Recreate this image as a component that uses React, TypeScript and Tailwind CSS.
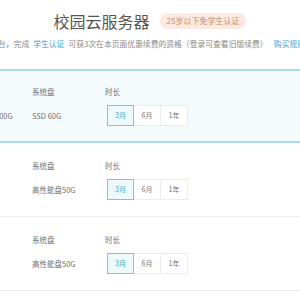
import React from "react";

const font = { fontFamily: '"Noto Sans CJK SC", "Noto Sans", sans-serif' };

const durations = ["3月", "6月", "1年"];

const Durations = () => (
  <div className="flex">
    {durations.map((d, i) => (
      <div
        key={d}
        className={
          i === 0
            ? "w-[27px] h-[21px] flex items-center justify-center border border-[#7cc7d6] bg-[#eef9fc] text-[#3fa9c2] text-[7px]"
            : "w-[27px] h-[21px] flex items-center justify-center border border-l-0 border-[#ececec] bg-white text-[#777] text-[7px]"
        }
      >
        {d}
      </div>
    ))}
  </div>
);

const Row = ({ disk, extra, active }: { disk: string; extra?: boolean; active?: boolean }) => (
  <div
    className={
      active
        ? "h-[74px] border-y-2 border-[#acdbe6] bg-[#f4fbfd] flex pl-[32px] pt-[15px] text-[7.5px] text-[#707070]"
        : "h-[74px] border-b border-[#ececec] bg-white flex pl-[32px] pt-[17px] text-[7.5px] text-[#707070]"
    }
  >
    {extra && (
      <div className="-ml-[67px] w-[67px] flex flex-col">
        <span className="h-[12px] leading-[12px]">数据盘</span>
        <span className="mt-[7px] h-[21px] flex items-center">高性能盘500G</span>
      </div>
    )}
    <div className="w-[73px] flex flex-col">
      <span className="h-[12px] leading-[12px]">系统盘</span>
      <span className="mt-[7px] h-[21px] flex items-center">{disk}</span>
    </div>
    <div className="flex flex-col">
      <span className="h-[12px] leading-[12px]">时长</span>
      <div className="mt-[7px] ml-[2px]">
        <Durations />
      </div>
    </div>
  </div>
);

export default function App() {
  return (
    <div className="w-[300px] h-[300px] overflow-hidden bg-white" style={font}>
      <div className="flex items-center justify-center gap-[10px] pt-[10px]">
        <span className="text-[16px] leading-[22px] text-[#555]">校园云服务器</span>
        <span className="rounded-full bg-[#fbe9e2] px-[7px] py-[3px] text-[8px] leading-[10px] text-[#c98d6b]">
          25岁以下免学生认证
        </span>
      </div>
      <div className="-ml-[2px] mt-[6px] whitespace-nowrap text-[7.8px] leading-[12px] text-[#888]">
        台，完成<span className="mx-[4px] text-[#3d9fd8]">学生认证</span>
        可获3次在本页面优惠续费的资格（登录可查看旧版续费）
        <span className="ml-[6px] text-[#3d9fd8]">购买规则</span>
      </div>
      <div className="mt-[19px]">
        <Row disk="SSD 60G" extra active />
        <Row disk="高性能盘50G" />
        <Row disk="高性能盘50G" />
      </div>
    </div>
  );
}
